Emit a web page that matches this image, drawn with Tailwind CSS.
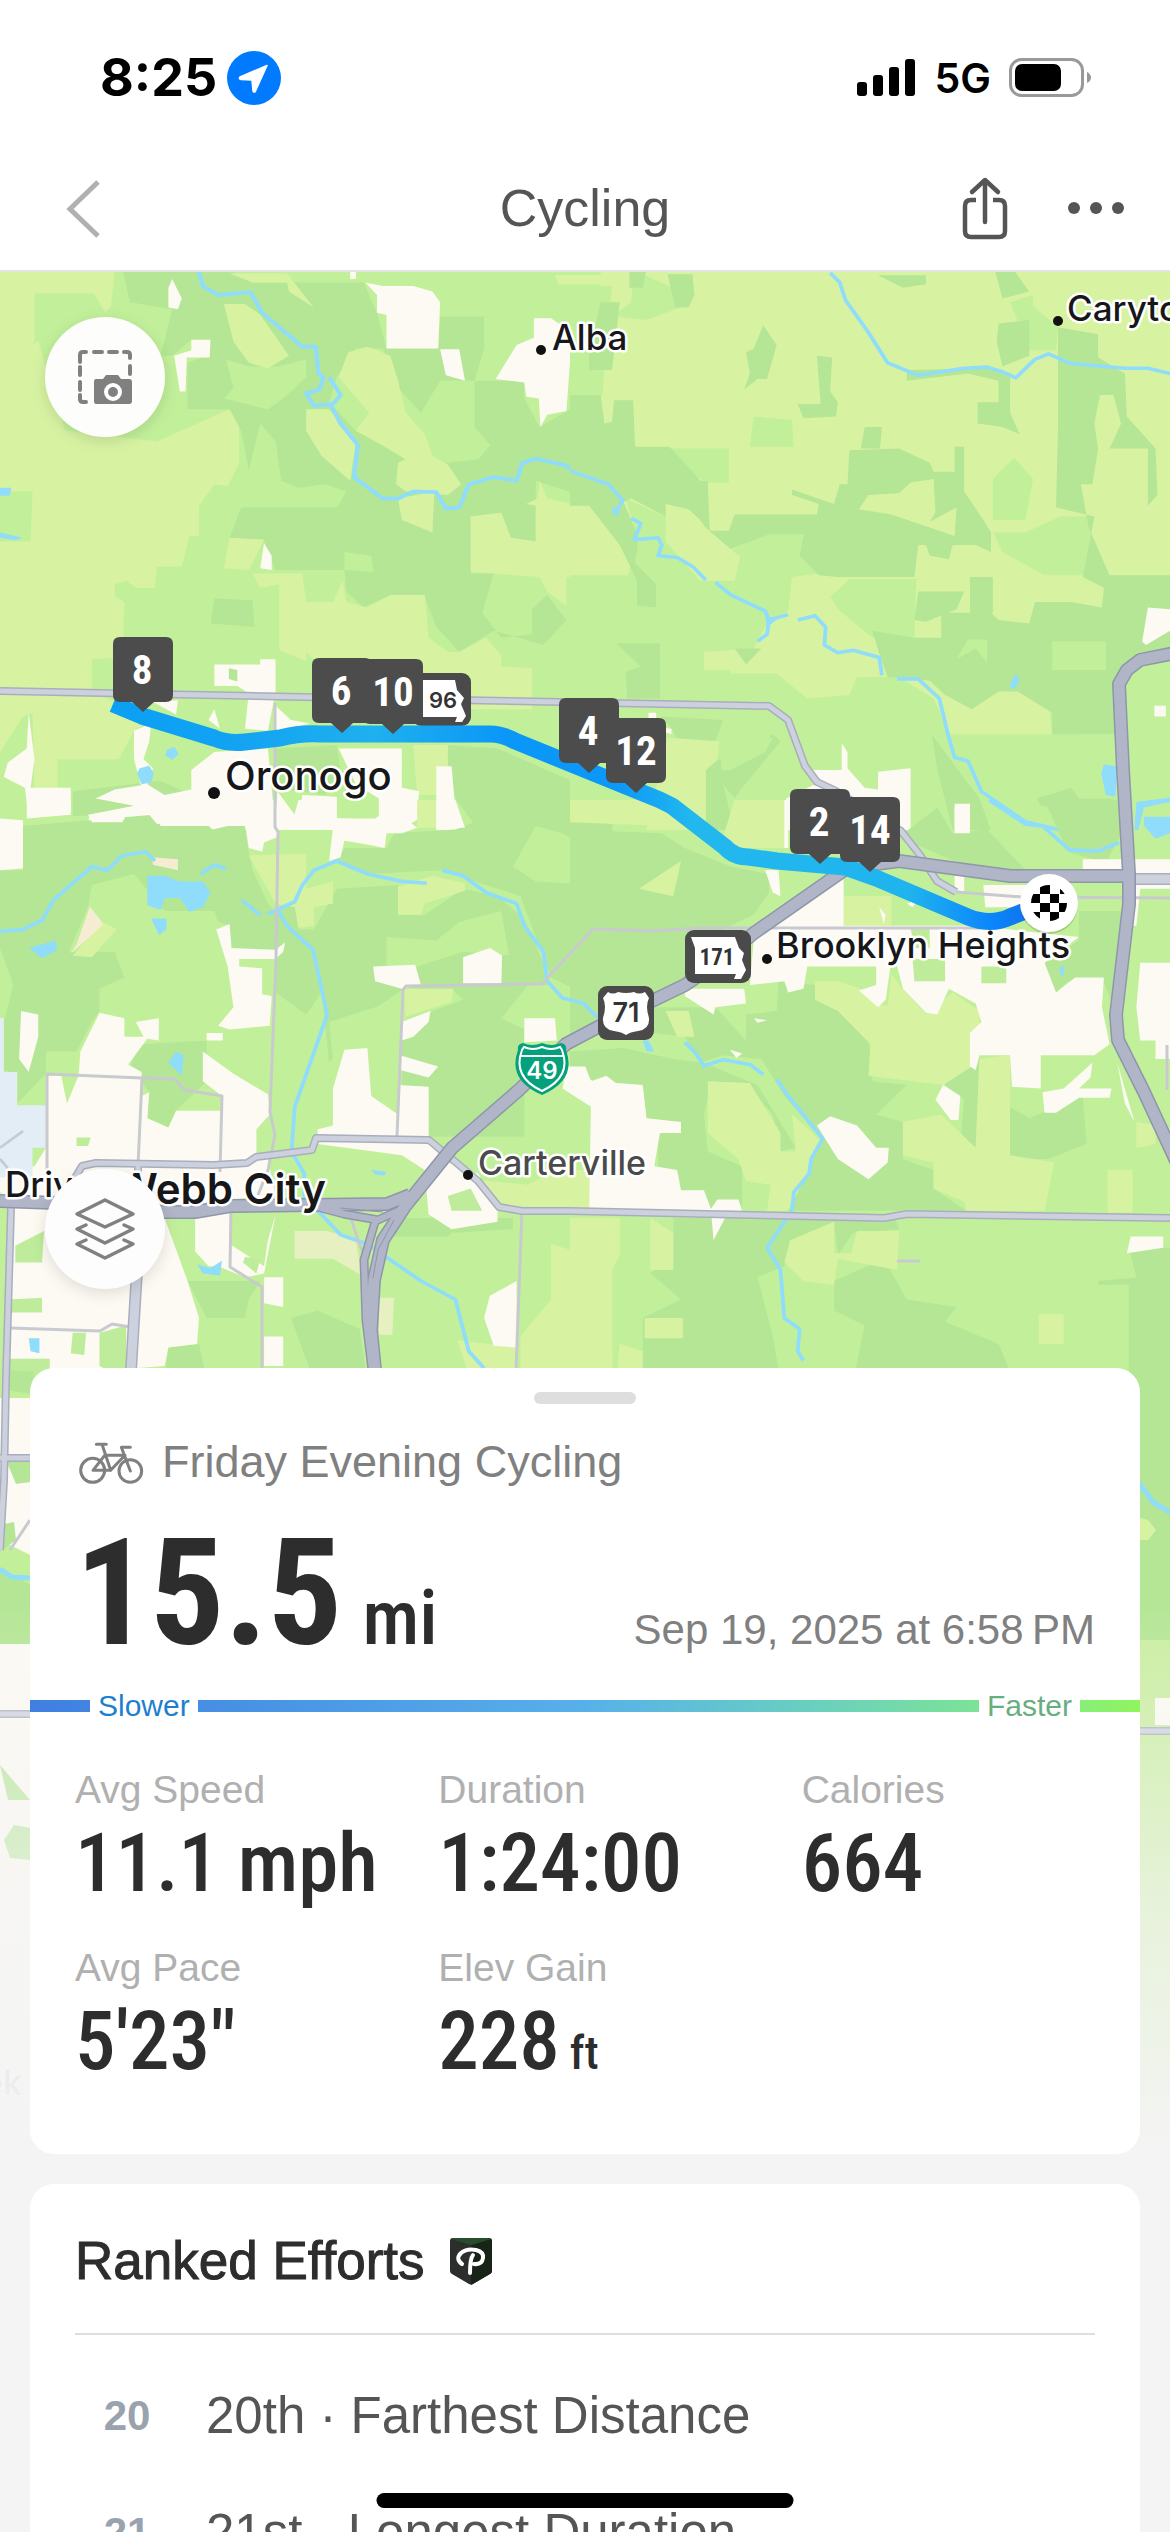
<!DOCTYPE html>
<html lang="en">

<head>
  <meta charset="UTF-8">
  <meta name="viewport" content="width=device-width, initial-scale=1.0">
  <title>Cycling</title>
  <script src="https://cdn.jsdelivr.net/npm/@tailwindcss/browser@4"></script>
</head>

<body class="h-screen overflow-hidden flex flex-col bg-[#f4f4f4] font-['Liberation_Sans',Arial,sans-serif]">
  <!-- Status bar -->
  <div class="bg-white h-[146px] pl-[100px] pr-[78px] pt-[10px] flex items-center justify-between font-['Inter',sans-serif] text-black">
    <div class="flex items-center gap-[10px]">
      <span class="text-[52px] leading-[60px] font-bold">8:25</span>
      <svg class="size-[54px]" viewBox="0 0 54 54">
        <circle cx="27" cy="27" r="27" fill="#007aff" />
        <path d="M40 14.500 L13 26 Q11.500 28 14 28.500 L25 29 L26 40 Q27 42.500 28.500 40 Z" fill="#fff" stroke="#fff" stroke-width="1.500" stroke-linejoin="round" />
      </svg>
    </div>
    <div class="flex items-center">
      <svg class="w-[58px] h-[38px]" viewBox="0 0 58 38">
        <rect x="0" y="23" width="10" height="14" rx="3" />
        <rect x="16" y="16" width="10" height="21" rx="3" />
        <rect x="32" y="8" width="10" height="29" rx="3" />
        <rect x="48" y="0" width="10" height="37" rx="3" />
      </svg>
      <span class="ml-5 text-[41px] leading-[50px] font-semibold">5G</span>
      <svg class="ml-[18px] w-[83px] h-[40px]" viewBox="0 0 83 40">
        <rect x="1.500" y="1.500" width="72" height="36" rx="11" fill="none" stroke="#999" stroke-width="3" />
        <rect x="6" y="6" width="46" height="27" rx="7" />
        <path d="M78 14 Q82 16 82 19.500 Q82 23 78 25 Z" fill="#999" />
      </svg>
    </div>
  </div>

  <!-- Header -->
  <header class="bg-white h-[126px] px-[46px] grid grid-cols-3 items-center border-b-2 border-[#e3e6df]">
    <button aria-label="Back" class="justify-self-start pl-[14px]">
      <svg class="w-[42px] h-[60px]" viewBox="0 0 42 60" fill="none" stroke="#b0b0b0" stroke-width="5">
        <path d="M38 4 L10 31 L38 58" />
      </svg>
    </button>
    <h1 class="justify-self-center text-[52px] leading-[60px] text-[#555]">Cycling</h1>
    <div class="justify-self-end flex items-center gap-[60px]">
      <button aria-label="Share">
        <svg class="w-[46px] h-[64px]" viewBox="0 0 46 64" fill="none" stroke="#555" stroke-width="4.500" stroke-linecap="round" stroke-linejoin="round">
          <path d="M14 24 H9 Q3 24 3 30 V55 Q3 61 9 61 H37 Q43 61 43 55 V30 Q43 24 37 24 H31" stroke-linecap="butt" />
          <path d="M23 46 V5 M10 16 L23 4 L36 16" />
        </svg>
      </button>
      <button aria-label="More">
        <svg class="w-[56px] h-[12px]" viewBox="0 0 56 12" fill="#555">
          <circle cx="6" cy="6" r="6" />
          <circle cx="28" cy="6" r="6" />
          <circle cx="50" cy="6" r="6" />
        </svg>
      </button>
    </div>
  </header>

  <main class="relative flex-1 overflow-hidden">
    <!-- Map -->
    <svg class="absolute inset-x-0 top-0 w-full" viewBox="0 272 1170 1880" font-family="Inter, sans-serif">
      <defs>
        <linearGradient id="route" gradientUnits="userSpaceOnUse" x1="113" y1="0" x2="1048" y2="0">
          <stop offset="0" stop-color="#0ba0f3" />
          <stop offset=".12" stop-color="#12a2f3" />
          <stop offset=".28" stop-color="#1fb0ee" />
          <stop offset=".42" stop-color="#0a97f8" />
          <stop offset=".54" stop-color="#0c98f8" />
          <stop offset=".62" stop-color="#22b8ee" />
          <stop offset=".85" stop-color="#20b4ee" />
          <stop offset=".94" stop-color="#0a86fb" />
          <stop offset="1" stop-color="#1468e8" />
        </linearGradient>
        <linearGradient id="fade" x1="0" y1="0" x2="0" y2="1">
          <stop offset="0" stop-color="#f4f4f4" stop-opacity="0" />
          <stop offset=".55" stop-color="#f4f4f4" stop-opacity=".7" />
          <stop offset="1" stop-color="#f4f4f4" />
        </linearGradient>
        <symbol id="pin" viewBox="0 0 60 75">
          <path d="M7 0 H53 Q60 0 60 7 V58 Q60 65 53 65 H41 L30 75 L19 65 H7 Q0 65 0 58 V7 Q0 0 7 0 Z" fill="#4c4c4c" />
        </symbol>
      </defs>
      <rect y="272" width="1170" height="1880" fill="#c2f09a" />

      <!-- North-west land cover -->
      <g transform="translate(0 270) scale(.3827 .3571)">
        <path fill="#b4e695" d="M320 0H600L660 35H950L985 120 1010 220H1145L1150 130H1265V220L1240 310H1150L1100 400 1040 330 1000 220H930L880 300 860 370 930 450 1060 530 1170 540 1250 530 1280 490 1240 440V310H1370V360L1410 440 1490 390H1600V660L1400 590V760L1330 750 1310 680 1230 690V850H1290L1260 960 1310 1030 1390 1020V950L1430 910 1480 980 1420 1050 1290 1010 1200 1070 1140 1000 1110 915H1010L950 945 905 900 900 840H720L690 760 600 750 630 665H880L905 620 850 600 780 610 735 590 720 480 680 430 650 560 630 450 595 390H490V260L540 240 550 195H500L450 240H420L450 110 340 90ZM0 880H72L75 1000 0 1005ZM560 920 660 925 665 1000 550 990ZM720 1340 880 1330 890 1400 850 1470 720 1450ZM1170 1330 1300 1340 1600 1480V1568H1250L1170 1450ZM190 1460 420 1430 500 1470 380 1520 190 1530Z" />
        <path fill="#c2f09a" d="M590 250 610 330 585 360 700 390 740 360 800 300 800 250 730 270 650 270ZM900 790 970 800 975 845 900 840ZM1090 460 1120 400 1160 310 1240 310 1210 420 1280 490 1250 530 1160 530Z" />
        <path fill="#d7f3a2" d="M0 0H300L290 100 275 120 245 65H90V200L60 230 55 290 30 320 0 270ZM0 250 100 200 170 450 410 480 600 390 625 440V540L595 605 560 600 520 660V745H495L475 830H410L405 890H355L330 870 300 880V915L325 930 320 1085 240 1090V1180L300 1210V1240L380 1270 350 1290 310 1370H150V1450H90L85 1240 60 1250 0 1350ZM585 95H640L680 125 755 240 700 275 650 260 610 200ZM885 300 910 230 960 215 1020 240 1040 310 1060 400 1110 460 1130 520 1170 545 1205 600 1170 630 1060 620 1035 600 1040 540 1060 530 1000 490 930 450 965 400ZM800 390H860L930 480 915 590 840 520 800 450ZM1040 640 1135 620 1130 735 1050 700ZM1230 690 1310 680 1335 750 1400 760V660L1375 655 1405 640 1410 590 1430 640 1540 665 1600 690V860H1480V940L1430 900 1410 860 1230 845ZM730 880 680 890 660 850H790L800 930H870L895 870 905 930 960 945 1020 910H1110L1120 1030 1170 1070H1200L1270 1030 1310 1080V1110L1390 1115V1230H1110L1100 1100H830L800 1070V1095L730 1065ZM600 750 690 755 650 840 585 835ZM1080 1330H1170V1470H1090ZM600 10H750L820 105 755 60 750 35H660ZM1450 15H1600V40H1460Z" />
        <path fill="#c2f09a" d="M0 620H85L80 760H0Z" />
        <path fill="#fcfaf3" d="M955 35 1000 45H1080L1130 60 1150 90 1145 220H1010V125L985 120V70ZM440 50 450 25 475 80 465 110 440 105ZM500 195H550L548 245H488L485 340H470L455 240 500 225ZM1395 135H1440L1500 180 1490 250 1480 395 1430 405 1412 440 1408 360 1375 355 1370 315 1295 305 1350 210 1395 190ZM1150 222H1200L1215 310 1165 295ZM690 765 710 800V840L680 835ZM560 1105H680V1090H720V1180L700 1290 640 1285 650 1185 620 1165H560ZM720 1220 760 1260 810 1270 720 1290ZM400 1210 465 1205 460 1245ZM350 1290 395 1270 390 1320 375 1370 400 1395 385 1440 370 1450 350 1370ZM75 1240 90 1370 80 1450H185V1520L75 1535 65 1450 10 1420 20 1380 70 1340ZM500 1400 560 1350 700 1340 720 1568H400V1540L230 1545 235 1525 350 1500 250 1480 300 1455 385 1440 430 1470 500 1455ZM885 1340H1050V1450L1095 1460 1090 1540 1040 1568H720L725 1460 780 1540 790 1470 880 1475V1535L990 1540V1480L930 1440ZM1140 1390H1180L1190 1510 1215 1568H1140ZM545 1260 560 1230 575 1285ZM915 0H930V25H915Z" />
        <path fill="#b4e695" d="M598 1115 620 1120V1152L598 1145Z" />
        <path fill="#90dcfb" d="M435 1345 455 1335 467 1355 450 1372 432 1360ZM365 1395 390 1388 402 1410 395 1435 370 1440 358 1410ZM0 610 30 610 25 632 0 632ZM0 735 60 750 40 757 0 750Z" />
        <g fill="none" stroke="#90dcfb" stroke-linejoin="round">
          <path stroke-width="11" d="M518 0 530 45 570 70 655 62 685 120 790 215 825 215 832 290 845 300 835 335 800 345 820 380 870 375 890 350 860 300M865 380 890 430 935 490 925 580 1000 640 1040 640 1080 620 1140 622 1165 668 1200 665 1225 600 1290 580 1350 590 1365 540 1400 528 1470 545 1568 590" />
        </g>
      </g>

      <!-- North-east land cover -->
      <g transform="translate(570 270) scale(.3827 .3571)">
        <path fill="#d7f3a2" d="M80 0H1600V1300H960L860 1200H400V1210L340 1120 0 860V660L80 430Z" />
        <path fill="#c2f09a" d="M0 45H110L100 150 50 260 90 280 85 350H0ZM165 0 270 50 300 100 200 140 110 130 160 90ZM480 410 580 420 585 495H470ZM260 500H415V595H360L330 580ZM1150 90 1210 70V100L1275 160 1270 225H1200ZM1105 585 1160 525 1210 585 1190 700H1105ZM1105 735H1190L1280 690H1370L1345 855H1240L1130 790ZM145 640 250 690V760L340 870H430L445 800 410 790 530 730H610L600 800 650 850 580 860 570 955 510 1000 480 1060 350 1070V1120H420L400 1210H0V855H150L180 760ZM0 1220 400 1200 410 1130H540L620 1200 730 1190 750 1140H860L950 1200 990 1290 1010 1370 1080 1480 1200 1568H0ZM680 915 730 865H905L900 1030H790L700 950ZM1250 1200 1360 1310 1330 1470 1260 1480 1230 1568H1600V1040H1400L1430 1300 1260 1310Z" />
        <path fill="#b4e695" d="M0 350H80L90 430 110 425 115 365H165L170 495H260L325 570 340 590H360L365 730H415L430 685H645L650 655 580 630V615L690 655 705 600H725L730 505 860 500 940 540 950 565H1005V495H1030V620L1080 700 1100 735V790L1060 770 1000 770 990 810 940 800 930 770H910L900 860H700L650 855 600 800 610 740H520L400 790 340 700 310 670 250 655V690L160 640 140 650 180 750 170 820 225 880V945L175 940V870L130 770 50 660H0ZM1275 160 1380 180V245L1450 290 1455 410 1530 500 1535 630 1510 660V500H1410L1440 430 1420 350H1385L1370 430 1380 500 1365 600H1335L1355 720 1410 855H1600V1070L1480 1075 1430 1150V1300H1260V1240L1170 1180H1120L1050 1230 980 1190 940 1150 830 1140 810 1080 790 1010 900 1030H970V960H1100L1120 980 1200 990 1215 930H1310L1390 945 1395 890 1340 860 1370 690 1270 665 1275 450ZM1110 0H1160L1200 60 1130 80ZM1120 150 1200 140V240L1130 270 1115 200ZM880 280 1100 275 1150 300V400L1175 460 1130 440 1065 430V370H1120V310L1040 290 880 310ZM505 155 540 210 515 305H490L455 335 470 290 460 230 480 220ZM645 240 685 245 680 340 700 370 695 410 610 415 595 375H655ZM760 500 770 440H815L810 500ZM805 15H930V40L870 50ZM155 0H200L190 50H155ZM255 12H320L325 70 310 105H275ZM120 1045H235V1200H150L145 1125 185 1110ZM430 1060H500L460 1105ZM945 1300 1000 1380 1070 1480 1100 1568H1000L960 1400ZM355 1568V1400L390 1370 460 1370 530 1300 550 1320 450 1450 430 1480 400 1440 430 1568ZM240 1250 400 1260 380 1320 310 1320 300 1380 270 1290ZM910 900 1030 900 1010 950 930 985 900 980ZM1045 860H1105V960H1045ZM1220 1480 1310 1450 1330 1480H1420V1520H1330L1230 1500ZM50 240 80 90 130 90 110 280 50 280Z" />
        <path fill="#d7f3a2" d="M755 670 780 630 860 625 890 595 950 585 955 680 940 705 1010 665 1005 745 840 685ZM255 1310 390 1320 385 1370 355 1400V1568H200ZM250 690H320L440 800 430 840 370 850Z" />
        <path fill="#c2f09a" d="M1260 1040H1400V1120H1260ZM1010 1090 1040 1035 1090 1035 1090 1100 1060 1060ZM395 1400V1350L460 1320 530 1310 510 1350 420 1400Z" />
        <path fill="#fcfaf3" d="M1510 945 1568 950V1010L1505 1050 1495 1040ZM1527 1220H1557V1250H1527ZM615 1400H710V1325L725 1350V1395L770 1450 805 1455V1405L890 1395V1568H560L565 1480 640 1440ZM1005 1495H1045V1568H1005ZM205 1240H225V1280L265 1285V1300L205 1280Z" />
        <path fill="#90dcfb" d="M1165 1130 1175 1150 1160 1175 1148 1165ZM1395 1385 1430 1390 1425 1475 1400 1470 1388 1410ZM1480 1490 1568 1478V1490L1500 1505 1485 1568H1475ZM510 970 545 975 515 1000ZM110 665 130 665 125 690 112 680Z" />
        <g fill="none" stroke="#90dcfb" stroke-linejoin="round">
          <path stroke-width="10" d="M680 8 705 35 720 85 780 175 830 260 910 295 1030 275 1090 272 1130 285 1165 302 1215 250 1250 235 1310 262 1450 275 1510 275 1568 290" />
          <path stroke-width="10" d="M0 562 100 600 138 645 115 685M160 695 185 710 168 755 230 750 240 770 230 800 280 805 320 830 355 868M380 875 420 910 510 955 520 980 570 965M520 980 515 1020 490 1040M595 980 640 968 668 1000 665 1050 700 1072 740 1065 808 1085 815 1135M855 1145 910 1145 965 1200 990 1310 1005 1365 1040 1375 1075 1460 1190 1545 1280 1568" />
        </g>
      </g>

      <!-- South-west land cover -->
      <g transform="translate(0 800) scale(.3827 .37)">
        <path fill="#b4e695" d="M60 70 400 40 420 70H640L650 140 660 190 700 280 720 300V405H600V340L570 330 560 300 430 300 350 200 240 230 230 290 180 410H300L325 480 260 510V570L240 600 200 680H120V740L45 820V740L10 730V600L35 500 0 400V190H60ZM720 300 770 280 780 350H820L880 240 1040 230V310H1110L1210 240 1300 260 1370 320 1420 440 1430 500H1380L1310 590 1370 620V910H1120V790L1050 770V620L1130 570 1210 540 1180 510H1055L970 570 960 670H890L860 710 840 520 800 580 720 520ZM900 130H1010L1030 90 1190 80 1340 20H1600V500L1520 520 1440 480 1360 260 1150 190 960 200 880 160ZM365 660 540 650V760L460 840 440 885 385 860 390 790 340 720ZM820 1568 760 1400 830 1380 940 1430 960 1568ZM490 1300H680L650 1350 640 1400 540 1400ZM1510 1300 1600 1260V1500L1510 1480ZM440 1480 520 1470 540 1568H430ZM1000 1180 1060 1130 1340 1130 1340 1160 1180 1170 1090 1270Z" />
        <path fill="#c2f09a" d="M1010 370 1140 380 1200 330 1310 300 1330 420 1210 410 1090 450 1060 510 1010 450ZM860 600 980 560 1040 560 1040 740 970 800 870 700ZM1340 180 1400 70 1470 90 1568 150V230L1400 220ZM1000 1180H1340V1300L1260 1400 1200 1430 1010 1350ZM780 990 1080 960 1050 1060 830 1070Z" />
        <path fill="#d7f3a2" d="M650 150 800 145V240L870 220V280L820 290V340L780 345 770 290 720 280ZM1040 235 1130 205 1215 225V245L1110 280 1100 310H1040ZM1055 510H1185L1180 545 1060 585ZM1180 1020 1250 1100 1568 1105V1000H1450L1380 1040ZM1440 1200 1600 1250V1568H1360V1450L1440 1350ZM1195 1460 1350 1480 1345 1568H1230ZM1090 0H1140V75H1090ZM270 330 305 350 240 425 190 420Z" />
        <path fill="#fcfaf3" d="M0 50 60 55V185L0 190ZM70 0H185V40L70 50ZM230 40 400 10 640 0H720L725 100 690 115 685 140 650 130 640 60 555 80 540 65H410L390 40H330L320 60H240ZM720 20 740 0 765 55 780 0H880V50H980L1050 0 1060 50 1090 75 1050 90H1010L1005 130 960 120 900 110 890 155 860 165 870 75H720ZM1140 0H1190L1215 75H1140ZM565 350 600 335 605 400 720 405 745 385 740 410 720 430H625V450L685 455V525L710 530 705 610 600 620 570 610 610 560 595 450ZM975 450 1085 445 1100 500 1050 510 980 490ZM1210 425 1280 400 1312 420 1310 495H1210ZM55 570 100 580V640L75 735 50 700ZM205 750 210 680 260 575 325 590V640H375L355 600 415 590V650L385 645 360 680 335 715 370 735V760ZM530 760V680L610 740 700 795 705 850 670 890V960L700 970 720 1070 600 1080V1200L690 1260 700 1190 720 1120 690 1280 640 1290 570 1260 545 1260 510 1220V1130H430L490 1300 520 1400 515 1470 440 1480 430 1530 360 1535 340 1568H20V1080L0 1060V1010L90 990 120 940V745H160L175 820 205 745 370 750V800L390 790 385 860 440 885 460 840H580V800ZM900 675 960 670 970 800 1040 850V770L1120 775V930L1170 980 1250 1010 1300 1110V1140L1180 1160 1120 1120 1110 1000 1050 960 830 930V890L870 880V780ZM1050 600 1125 570 1120 600 1080 640 1050 650 1045 690 1145 720 1120 750 1045 730ZM1350 1300V1480L1290 1475 1265 1400 1280 1340ZM1370 590H1450L1455 650 1370 655ZM690 1290H740V1370L690 1360ZM690 1450H740V1530H690ZM1480 720 1600 715V930L1545 900V830L1470 780ZM540 630H582V650H540Z" />
        <path fill="#e2edf5" d="M0 590H10V735H45V825H120V940H85V1020H0Z" />
        <path fill="#bfec9b" d="M40 1205 115 1165 110 1250H40ZM20 1350 110 1345V1385H20ZM190 1440H225L220 1500 185 1495ZM20 1510H130V1568H20ZM260 1440 330 1420V1568L260 1530ZM200 912H237L230 935H200ZM640 1235 680 1240 670 1280 635 1250ZM1170 1070 1230 1050 1260 1110 1180 1110Z" />
        <path fill="#f5ecd2" d="M235 288 270 335 235 370 185 415 200 390ZM395 155 465 160V190L400 175Z" />
        <path fill="#e6f0c0" d="M770 1165H855L930 1190 945 1285 870 1240H770ZM990 1345H1030L1025 1445H990Z" />
        <path fill="#90dcfb" d="M385 205H430L470 220H530L550 250 530 290 495 303 470 265H430L420 297 385 285ZM395 320H435V350L415 365ZM75 400 145 380 150 405 110 428ZM440 710 460 680 480 690 475 745ZM515 1255 550 1265 580 1245 575 1285 530 1280ZM75 1455H103V1495L80 1490ZM970 1000 1010 1005 1005 1015 980 1012Z" />
        <g fill="none" stroke="#90dcfb" stroke-linejoin="round">
          <path stroke-width="10" d="M0 355 60 350 110 325 140 270 240 180 280 190 320 150 380 140 405 165M525 200 560 175 590 187M632 270 680 312M700 308 770 275 790 230 820 190 880 165 960 200 1050 220 1115 225M1155 190 1210 205 1270 250 1350 280 1370 340 1420 410 1430 490 1470 535 1510 545 1555 590M722 290 750 340 818 405 855 580 770 830 762 950 795 1010 795 1080 840 1120 890 1175 960 1200 1100 1300 1190 1350 1225 1490 1265 1536" />
        </g>
        <path fill="none" stroke="#c3cbd8" stroke-width="7" d="M0 940 60 895M0 970 20 995" />
      </g>

      <!-- South-east land cover -->
      <g transform="translate(570 800) scale(.3827 .37)">
        <path fill="#b4e695" d="M0 80 240 90 300 130 420 180 520 200V250L480 310 400 350 300 500 220 560 60 640 0 660ZM220 560 380 560 460 650V580L540 570 545 490 640 500 780 640 790 760 880 770 800 850 870 870V970L950 1000V1050L1035 1110H560L630 960 660 920 560 800 500 700 400 690 340 710 300 640 220 630ZM0 680 140 670 270 700 350 710 490 770 590 940 550 950 530 850 460 770 370 760 350 850 360 950 450 990V1110H300L230 990V890L290 870 200 860 190 770 60 760 0 720ZM1150 830 1200 860 1340 800 1350 930 1250 970H1140ZM1060 940 1020 920 1030 810 980 770 970 700 1070 690ZM270 1130H850L860 1160 740 1170 700 1230 690 1140 580 1190 560 1260 490 1290 530 1450 550 1568H190V1400L290 1350 210 1280 270 1230ZM690 1300 820 1240 880 1350 1010 1370 980 1410 1120 1470 1160 1568H740L770 1420 690 1380ZM1460 1210H1600V1568H1460V1310H1380V1300L1480 1290ZM1330 300H1440L1420 560 1390 480 1300 490 1270 520 1240 440 1330 380ZM860 100 960 20 1000 90 1090 80 1200 200 1080 200ZM1240 0 1430 0 1440 90 1400 170 1300 140Z" />
        <path fill="#d7f3a2" d="M640 490H700L760 510 800 555H830L840 470 860 500 930 580 1000 520 1070 570V630L1050 720 975 770 780 745 785 660 700 570 640 540ZM870 870 970 850 1060 940 1070 700 1150 690V960L1265 980 1240 1110H1035L1030 1085 950 1050V980L870 960ZM360 760 470 765 550 900V950H590L580 850 655 920 620 1010 570 1110H515L525 1040 460 1030 440 970 360 900ZM560 1250 575 1190 690 1140V1225H735L750 1165H860L855 1270 700 1240 690 1310 610 1300ZM1405 1000H1470V1115H1405ZM1225 1390H1290V1470H1225ZM195 1400H295V1455H195ZM210 1130 270 1170V1270H210ZM0 1130H130V1230L100 1290 0 1280ZM180 240 290 165 270 260ZM715 260H840V340H715ZM250 570H310L325 640H280ZM1480 870 1530 880V930L1480 940ZM130 1470 190 1490V1568H120ZM0 0H350V70H250L0 60ZM430 0H570V130H430L400 100Z" />
        <path fill="#fcfaf3" d="M480 380 605 290V260L700 200 715 210V340L1060 340 1330 370 1240 440 1270 520 1320 480H1395L1390 560 1410 660 1370 690H1230V780L1155 775 1150 690H1070L1060 730 1045 720V630L1075 600 1060 550 990 510 960 580 930 575 870 510 850 430H840L825 540 805 560 755 515 800 500V450H620L610 510 570 520 560 490 470 500ZM1490 440H1568V700H1530V650H1490L1480 560ZM1430 710 1475 870 1450 820ZM1235 790 1290 780 1365 710 1360 750 1330 780H1415L1410 805H1330L1270 845H1240ZM955 810 975 770 1020 800 1015 865H995ZM645 880 680 855 750 880 800 940H833L830 980 780 1025 700 970ZM0 720H40L55 760 95 745 120 765 190 770 200 860 290 870V900H235L220 990 280 1000 290 1055H350L370 1110H50L55 800 0 780ZM365 1110 385 1080H440L450 1110ZM370 1130H405L375 1190ZM1465 1180H1550V1210L1455 1225ZM510 190H545L550 260 530 250ZM300 510H455L460 550 380 560 375 580 300 530ZM1005 20 1045 10V90H1005ZM1080 230H1240V290H1085ZM1340 160H1568V240H1490L1480 340H1470L1460 200H1340ZM480 590 515 595 490 602ZM418 675 450 685 435 697ZM1005 205H1030V250L1005 240ZM560 0H570V130H560ZM860 0H885L880 80ZM808 290 825 310 820 335ZM880 280 910 270 895 290Z" />
        <path fill="#bfec9b" d="M895 430H980V490H900ZM1075 450H1140V495H1075ZM890 345H940V400H900Z" />
        <path fill="#90dcfb" d="M1500 45H1568V90L1530 105 1500 70ZM1280 450 1293 450 1290 475 1280 470ZM190 650 205 650 220 680 200 680Z" />
        <g fill="none" stroke="#90dcfb" stroke-linejoin="round">
          <path stroke-width="10" d="M0 540 35 550 75 590M1095 0 1190 65 1235 70 1305 135 1380 138 1435 115M300 655 325 680 350 718 400 702 470 715 505 742M540 755 570 800 660 915 630 970 625 1010 585 1060 580 1110 515 1210 550 1270 560 1400 600 1430 595 1490 610 1515M1480 60 1490 10 1568 0" />
        </g>
      </g>

      <!-- Land beside and below the sheet -->
      <path fill="#fcfaf3" d="M0 1398H40V1560L0 1540ZM0 1644H40V2152H0Z" />
      <path fill="#b4e695" d="M1130 1380H1170V1640L1130 1640ZM0 1568 40 1590V1644H0ZM8 1370 34 1372 30 1394 8 1390ZM6 1460H30V1482L16 1484ZM0 1525 14 1522 16 1540 0 1552ZM0 1765 30 1800H8ZM4 1840 14 1825 30 1828V1860L10 1858Z" />
      <path fill="#c9ee9f" d="M1130 1640H1170V2152H1130Z" />
      <path fill="#fcfaf3" d="M1155 1698H1170V1725H1155Z" />
      <path fill="#d7f3a2" d="M1130 1515 1148 1520 1156 1530 1148 1540H1130Z" />
      <path fill="none" stroke="#90dcfb" stroke-width="5" d="M1138 1482 1154 1503 1170 1512M0 1569 12 1577 30 1578" />

      <!-- Minor roads -->
      <g fill="none" stroke="#c9cacf" stroke-width="3" stroke-linejoin="round">
        <path d="M275 703V827L278 832 276 960 270 1112 275 1135 268 1170 258 1195" />
        <path d="M47 1172V1074L142 1078 174 1079 185 1090 222 1096 220 1172M142 1078 138 1166" />
        <path d="M397 1136 403 990 406 986 542 984 549 976 593 929 654 931 700 928H990" />
        <path d="M231 1210 230 1267 262 1287V1370M522 1211 516 1370M10 1328 100 1331 112 1324 130 1327" />
        <path d="M350 1215 358 1240 366 1260M956 892 1022 897 1170 898M30 1520 10 1550M897 1261 920 1261M1167 1045V1090" />
      </g>
      <!-- Secondary roads -->
      <g fill="none" stroke-linejoin="round">
        <g stroke="#a9aebf" stroke-width="8">
          <path d="M0 691 400 699 769 706 788 720 805 766 817 782 834 790 901 831 920 855 937 881 956 892" />
          <path d="M73 1181 82 1166 96 1163 214 1165 247 1163 256 1157 312 1150 316 1138 429 1140 452 1159 478 1181 499 1207 522 1211H570L884 1218 907 1214 1170 1218" />
          <path d="M11 1207 6 1380 4 1480 0 1550M138 1166V1281M0 1714H40M1130 1731H1170M0 1458H40" />
          <path stroke-width="12" d="M137 1270 131 1370M1136 879H1170" />
        </g>
        <g stroke="#ccd1dd" stroke-width="5">
          <path d="M0 691 400 699 769 706 788 720 805 766 817 782 834 790 901 831 920 855 937 881 956 892" />
          <path d="M73 1181 82 1166 96 1163 214 1165 247 1163 256 1157 312 1150 316 1138 429 1140 452 1159 478 1181 499 1207 522 1211H570L884 1218 907 1214 1170 1218" />
          <path d="M11 1207 6 1380 4 1480 0 1550M138 1166V1281M0 1714H40M1130 1731H1170M0 1458H40" />
          <path stroke-width="9" d="M137 1270 131 1370M1136 879H1170" />
        </g>
      </g>
      <!-- Highways -->
      <g fill="none" stroke-linejoin="round">
        <g stroke="#8f96aa" stroke-width="14">
          <path d="M1175 653 1140 660 1127 670 1119 684 1123 770 1129 874V904L1116 1015 1118 1040 1144 1092 1178 1165" />
          <path d="M845 868 899 861 1010 876H1130" />
          <path d="M850 866 754 933 723 959 685 985 654 1000 600 1026 566 1044 520 1089 452 1148 406 1205 383 1240 374 1280 371 1330 375 1370" />
          <path d="M0 1201 57 1203 165 1212 195 1212 230 1206 387 1204 410 1195" />
          <path stroke-width="9" d="M321 1208 344 1214 378 1220 400 1210M375 1222 364 1260 366 1320 372 1370" />
        </g>
        <g stroke="#b0b6c8" stroke-width="11">
          <path d="M1175 653 1140 660 1127 670 1119 684 1123 770 1129 874V904L1116 1015 1118 1040 1144 1092 1178 1165" />
          <path d="M845 868 899 861 1010 876H1130" />
          <path d="M850 866 754 933 723 959 685 985 654 1000 600 1026 566 1044 520 1089 452 1148 406 1205 383 1240 374 1280 371 1330 375 1370" />
          <path d="M0 1201 57 1203 165 1212 195 1212 230 1206 387 1204 410 1195" />
          <path stroke-width="6" d="M321 1208 344 1214 378 1220 400 1210M375 1222 364 1260 366 1320 372 1370" />
        </g>
        <path stroke="#8f96aa" stroke-width="1" d="M340 1208 383 1212M394 1220 378 1250 373 1278" />
      </g>

      <!-- Towns -->
      <g fill="#17171a" stroke="#fff" stroke-width="5" stroke-linejoin="round" paint-order="stroke" font-weight="500">
        <text x="552" y="350" font-size="35">Alba</text>
        <text x="1067" y="321" font-size="35">Caryton</text>
        <text x="225" y="790" font-size="40">Oronogo</text>
        <text x="776" y="958" font-size="36">Brooklyn Heights</text>
        <text x="5" y="1197" font-size="35">Driver</text>
        <text x="326" y="1204" font-size="42" font-weight="600" text-anchor="end">Webb City</text>
        <text x="478" y="1175" font-size="34" fill="#4a4a4a">Carterville</text>
        <text x="22" y="2095" font-size="34" fill="#999" text-anchor="end">Creek</text>
      </g>
      <g fill="#111">
        <circle cx="541" cy="350" r="5" />
        <circle cx="1058" cy="321" r="5" />
        <circle cx="214" cy="793" r="6" />
        <circle cx="767" cy="959" r="5" />
        <circle cx="468" cy="1175" r="5" />
      </g>

      <!-- Route shields -->
      <g font-weight="600" text-anchor="middle" fill="#333">
        <rect x="412" y="673" width="59" height="53" rx="9" fill="#4a4a4a" />
        <path d="M420 680 H455 L457 690 L464 698 L461 704 L466 716 L462 722 H455 L457 717 H420 Z" fill="#fff" />
        <text x="443" y="708" font-size="22">96</text>
        <rect x="685" y="930" width="66" height="53" rx="9" fill="#4a4a4a" />
        <path d="M691 937 H735 L739 948 L744 953 L742 960 L746 970 L741 979 H734 L736 974 H695 V948 Z" fill="#fff" />
        <text x="717" y="965" font-size="23" font-family="Roboto Condensed, Roboto, sans-serif" font-weight="700">171</text>
        <rect x="598" y="986" width="56" height="54" rx="9" fill="#4a4a4a" />
        <path d="M608 992 Q613 995 618 992 Q626 994 634 992 Q639 995 645 992 L649 998 Q645 1006 649 1018 Q650 1029 638 1031 Q630 1032 626 1035 Q622 1032 614 1031 Q602 1029 603 1018 Q607 1006 603 998 Z" fill="#fff" />
        <text x="626" y="1022" font-size="27">71</text>
        <path d="M523 1043 Q532 1047 542 1043 Q552 1047 561 1043 Q567 1044 566 1050 Q577 1080 542 1095 Q507 1080 518 1050 Q517 1044 523 1043 Z" fill="#05a17c" />
        <path d="M524 1047 Q533 1051 542 1047 Q551 1051 560 1047 L562 1050 Q572 1077 542 1091 Q512 1077 522 1050 Z M520 1056 H564" fill="none" stroke="#fff" stroke-width="2" />
        <text x="542" y="1079" font-size="24" fill="#fff">49</text>
      </g>

      <!-- Ride -->
      <path fill="none" stroke="url(#route)" stroke-width="17" stroke-linejoin="round" d="M113 704 142 716 214 738 Q228 744 245 742 L280 738 Q300 733 320 734 H490 Q502 734 515 741 L660 800 672 806 725 847 Q734 857 748 857 L777 861 845 867 876 878 968 917 Q990 926 1010 917 L1048 902" />
      <g font-family="Roboto Condensed, Liberation Sans, sans-serif" font-size="41" font-weight="700" fill="#fff" text-anchor="middle">
        <use href="#pin" x="113" y="637" width="60" height="75" />
        <text x="142" y="684">8</text>
        <use href="#pin" x="312" y="658" width="60" height="75" />
        <text x="341" y="705">6</text>
        <use href="#pin" x="363" y="659" width="60" height="75" />
        <text x="393" y="706">10</text>
        <use href="#pin" x="559" y="698" width="60" height="75" />
        <text x="588" y="745">4</text>
        <use href="#pin" x="606" y="718" width="60" height="75" />
        <text x="636" y="765">12</text>
        <use href="#pin" x="790" y="789" width="60" height="75" />
        <text x="819" y="836">2</text>
        <use href="#pin" x="840" y="797" width="60" height="75" />
        <text x="870" y="844">14</text>
      </g>
      <circle cx="1049" cy="905" r="29" fill="#000" opacity=".15" />
      <circle cx="1049" cy="903" r="29" fill="#fff" />
      <clipPath id="flag"><circle cx="1049" cy="903" r="18" /></clipPath>
      <path clip-path="url(#flag)" d="M1040 884h10v10h-10zM1060 884h10v10h-10zM1030 894h10v9h-10zM1050 894h9v9h-9zM1040 903h10v9h-10zM1059 903h10v9h-10zM1030 912h10v10h-10zM1050 912h9v10h-9zM1030 884h3v10h-3z" />

      <rect y="1600" width="1170" height="552" fill="url(#fade)" />
    </svg>

    <!-- Map buttons -->
    <button aria-label="Capture map" class="absolute left-[45px] top-[45px] size-[120px] rounded-full bg-[#fdfdfb] shadow-[0_4px_16px_rgba(0,0,0,0.12)] flex items-center justify-center">
      <svg class="size-[56px]" viewBox="0 0 56 56">
        <path d="M3 13V6Q3 3 6 3H9M17 3H25M32 3H40M47 3H50Q53 3 53 6V9M53 17V25M3 18V26M3 33V41M3 46V50Q3 53 6 53H9" fill="none" stroke="#808080" stroke-width="4" stroke-linecap="round" />
        <path d="M19 30H26L29 26H41L44 30H52Q55 30 55 33V52Q55 55 52 55H19Q17 55 17 52V33Q17 30 19 30Z" fill="#808080" />
        <circle cx="36" cy="43" r="7" fill="#808080" stroke="#fff" stroke-width="4" />
      </svg>
    </button>
    <button aria-label="Map layers" class="absolute left-[45px] top-[897px] size-[120px] rounded-full bg-[#fdfdfd] shadow-[0_4px_16px_rgba(0,0,0,0.12)] flex items-center justify-center">
      <svg class="size-[64px]" viewBox="0 0 64 64" fill="none" stroke="#808080" stroke-width="3.500" stroke-linejoin="round" stroke-linecap="round">
        <path d="M32 3 60 17 32 30 4 17Z" />
        <path d="M13 28 4 32 32 46 60 32 51 28" />
        <path d="M13 43 4 47 32 61 60 47 51 43" />
      </svg>
    </button>

    <!-- Sheet -->
    <div class="relative mt-[1096px] mx-[30px]">
      <section class="bg-white rounded-[24px] pt-6 pb-[70px]">
        <div class="w-[102px] h-3 mx-auto rounded-full bg-[#dedede]"></div>
        <div class="mt-[30px] px-[45px] flex items-center gap-[18px]">
          <svg class="w-[69px] h-[45px]" viewBox="15 30 207 135" fill="none" stroke="#808080" stroke-width="9" stroke-linecap="round" stroke-linejoin="round">
            <circle cx="68" cy="121" r="36" />
            <circle cx="181" cy="123" r="34" />
            <path d="M79 43H109M96 43 122 121H69L104 76H165L122 121M181 123 154 52H181" />
          </svg>
          <h2 class="text-[45px] leading-[56px] text-[#808080]">Friday Evening Cycling</h2>
        </div>
        <div class="mt-[26px] px-[45px] flex items-baseline justify-between">
          <p class="flex items-baseline gap-5 font-['Roboto_Condensed',Roboto,sans-serif] font-bold text-[#2d2d2e]"><span class="text-[148px] leading-[156px]">15.5</span><span class="text-[76px] leading-none font-medium">mi</span></p>
          <time class="text-[42px] leading-none text-[#808080]">Sep 19, 2025 at 6:58&#8239;PM</time>
        </div>

        <!-- Pace legend -->
        <div class="mt-4 flex items-center justify-between bg-linear-to-r from-[#3f7fe0] from-0% via-[#58b0ea] via-50% to-[#8ff55e] bg-[length:100%_12px] bg-no-repeat bg-center text-[30px] leading-[36px] px-[60px]">
          <span class="bg-white px-2 text-[#1f7fcf]">Slower</span>
          <span class="bg-white px-2 text-[#68ae80]">Faster</span>
        </div>

        <dl class="mt-[42px] px-[45px] -mr-[70px] grid grid-cols-3 gap-y-[38px]">
          <div>
            <dt class="text-[39px] leading-[48px] text-[#b0b0b0]">Avg Speed</dt>
            <dd class="mt-2 font-['Roboto_Condensed',Roboto,sans-serif] text-[81px] leading-[84px] font-medium text-[#2d2d2e]">11.1 mph</dd>
          </div>
          <div>
            <dt class="text-[39px] leading-[48px] text-[#b0b0b0]">Duration</dt>
            <dd class="mt-2 font-['Roboto_Condensed',Roboto,sans-serif] text-[81px] leading-[84px] font-medium text-[#2d2d2e]">1:24:00</dd>
          </div>
          <div>
            <dt class="text-[39px] leading-[48px] text-[#b0b0b0]">Calories</dt>
            <dd class="mt-2 font-['Roboto_Condensed',Roboto,sans-serif] text-[81px] leading-[84px] font-medium text-[#2d2d2e]">664</dd>
          </div>
          <div>
            <dt class="text-[39px] leading-[48px] text-[#b0b0b0]">Avg Pace</dt>
            <dd class="mt-2 font-['Roboto_Condensed',Roboto,sans-serif] text-[81px] leading-[84px] font-medium text-[#2d2d2e]">5'23"</dd>
          </div>
          <div>
            <dt class="text-[39px] leading-[48px] text-[#b0b0b0]">Elev Gain</dt>
            <dd class="mt-2 font-['Roboto_Condensed',Roboto,sans-serif] text-[81px] leading-[84px] font-medium text-[#2d2d2e]">228<span class="ml-[10px] text-[46px] leading-none">ft</span></dd>
          </div>
        </dl>
      </section>

      <section class="mt-[30px] bg-white rounded-t-[24px] pt-[45px] px-[45px]">
        <div class="flex items-center gap-6">
          <h2 class="text-[53px] leading-[64px] text-[#2d2d2e] [-webkit-text-stroke:1px_#2d2d2e]">Ranked Efforts</h2>
          <svg class="w-[44px] h-[48px]" viewBox="0 0 44 48">
            <path d="M4 1H40Q43 1 43 4V34Q43 36 41 37L24 47Q22 48 20 47L3 37Q1 36 1 34V4Q1 1 4 1Z" fill="#2b2e2d" />
            <path d="M22 8 42 2Q43 3 43 4V34Q43 36 41 37L22 48Z" fill="#182417" />
            <path d="M4 1H40L42 2 22 8 2 2Z" fill="#274d2c" />
            <path d="M13 27Q6 22 12 16Q18 11 27 13Q35 15 34 21Q33 28 25 27M24 18Q21 22 21 36" fill="none" stroke="#fff" stroke-width="4" stroke-linecap="round" />
          </svg>
        </div>
        <hr class="mt-10 border-t-2 border-[#dedede]">
        <ul class="pt-[22px]">
          <li class="h-[117px] flex items-center">
            <span class="w-[104px] text-center text-[42px] leading-[60px] font-bold text-[#98a3ae]">20</span>
            <span class="ml-[27px] text-[51px] leading-[60px] text-[#555]">20th · Farthest Distance</span>
          </li>
          <li class="h-[117px] flex items-center">
            <span class="w-[104px] text-center text-[42px] leading-[60px] font-bold text-[#98a3ae]">21</span>
            <span class="ml-[27px] text-[51px] leading-[60px] text-[#555]">21st · Longest Duration</span>
          </li>
        </ul>
      </section>
    </div>

    <!-- Home indicator -->
    <div class="absolute bottom-6 left-1/2 -translate-x-1/2 w-[417px] h-[15px] rounded-full bg-black"></div>
  </main>
</body>

</html>
